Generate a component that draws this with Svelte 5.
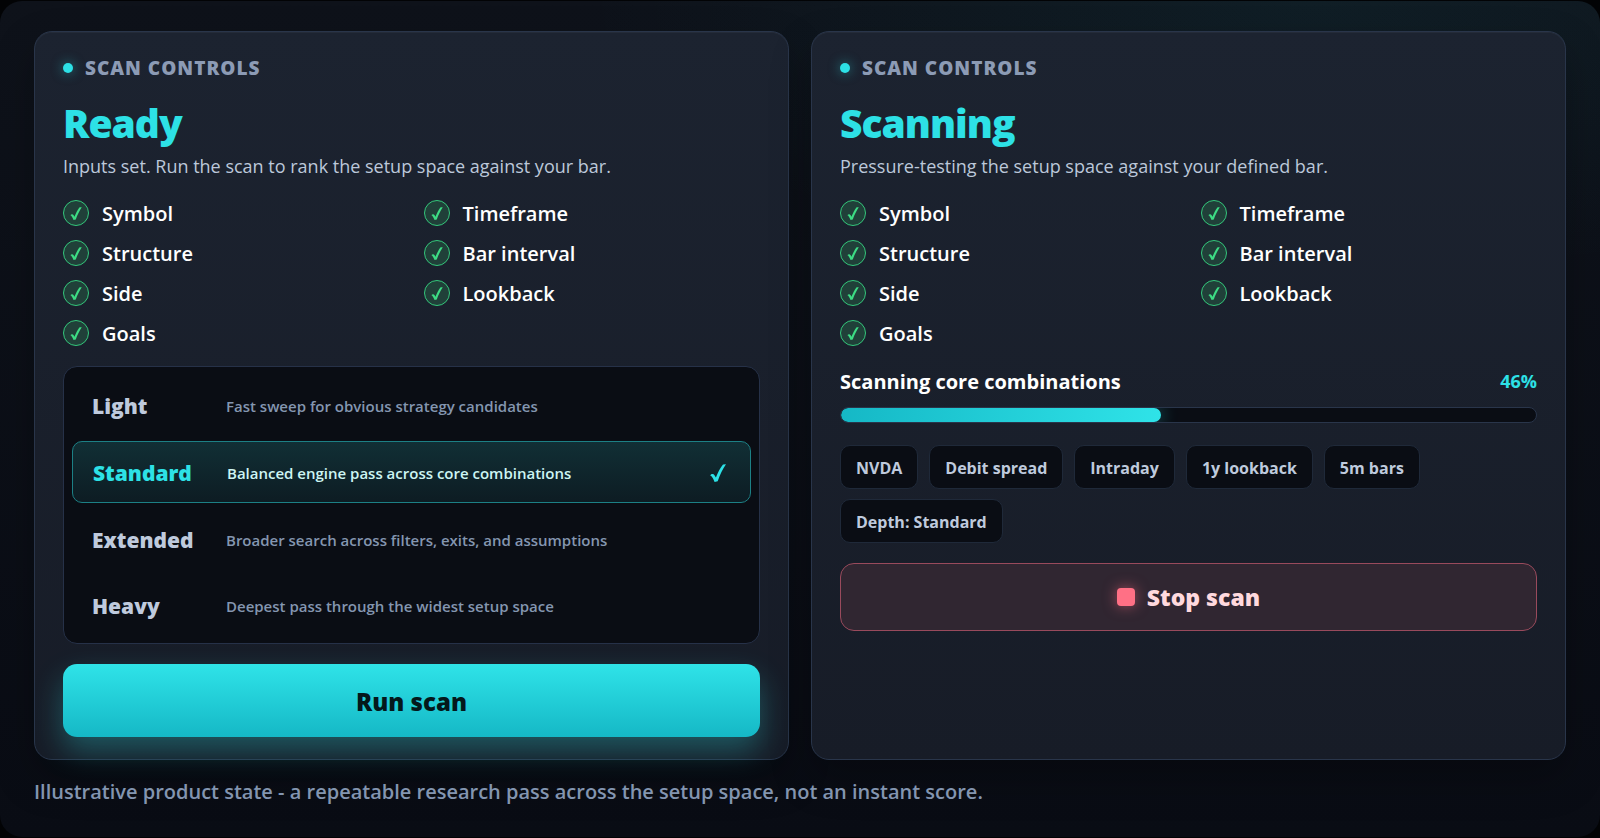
<script>
  const inputs = ['Symbol', 'Timeframe', 'Structure', 'Bar interval', 'Side', 'Lookback', 'Goals'];

  const depths = [
    { name: 'Light', note: 'Fast sweep for obvious strategy candidates' },
    { name: 'Standard', note: 'Balanced engine pass across core combinations' },
    { name: 'Extended', note: 'Broader search across filters, exits, and assumptions' },
    { name: 'Heavy', note: 'Deepest pass through the widest setup space' }
  ];

  let depth = 'Standard';
  let progress = 46;

  $: chips = ['NVDA', 'Debit spread', 'Intraday', '1y lookback', '5m bars', `Depth: ${depth}`];
</script>

{#snippet tick()}
  <svg class="tick" viewBox="0 0 16 18" aria-hidden="true">
    <path d="M0.2 11.4 C1.4 9.6 3.600 9.6 4.500 11.2 L5.900 13.600 C8 8.200 10.200 3.800 13 0.400 L16 0.200 C12.700 5 10 10.600 7.700 17.200 L4.600 17.900 C3.600 15.400 2.700 13.800 1.900 12.700 C1.400 12 0.800 11.600 0.200 11.400 Z" />
  </svg>
{/snippet}

{#snippet checklist()}
  <ul class="checklist">
    {#each inputs as input}
      <li>
        <span class="badge">{@render tick()}</span>
        <span class="item">{input}</span>
      </li>
    {/each}
  </ul>
{/snippet}

<main class="stage">
  <div class="panels">
    <section class="panel">
      <div class="eyebrow"><span class="dot"></span>SCAN CONTROLS</div>
      <header>
        <h2>Ready</h2>
        <p>Inputs set. Run the scan to rank the setup space against your bar.</p>
      </header>

      {@render checklist()}

      <div class="depths" role="radiogroup" aria-label="Scan depth">
        {#each depths as option}
          <label class="depth" class:selected={depth === option.name}>
            <input type="radio" name="depth" value={option.name} bind:group={depth} />
            <span class="depth-name">{option.name}</span>
            <span class="depth-note">{option.note}</span>
            {#if depth === option.name}
              {@render tick()}
            {/if}
          </label>
        {/each}
      </div>

      <button class="run">Run scan</button>
    </section>

    <section class="panel">
      <div class="eyebrow"><span class="dot"></span>SCAN CONTROLS</div>
      <header>
        <h2>Scanning</h2>
        <p>Pressure-testing the setup space against your defined bar.</p>
      </header>

      {@render checklist()}

      <div class="progress">
        <div class="progress-head">
          <span>Scanning core combinations</span>
          <span class="percent">{progress}%</span>
        </div>
        <div class="track" role="progressbar" aria-label="Scanning core combinations" aria-valuenow={progress} aria-valuemin="0" aria-valuemax="100">
          <div class="fill" style="width: {progress}%"></div>
        </div>
      </div>

      <div class="chips">
        {#each chips as chip}
          <span class="chip">{chip}</span>
        {/each}
      </div>

      <button class="stop"><span class="stop-icon"></span>Stop scan</button>
    </section>
  </div>

  <p class="caption">Illustrative product state - a repeatable research pass across the setup space, not an instant score.</p>
</main>

<style>
  :global(body) {
    margin: 0;
    background: #020305;
    font-family: 'Segoe UI', 'Open Sans', 'Noto Sans', sans-serif;
    color: #ffffff;
  }

  .stage {
    margin: 1px 0;
    padding: 30px 34px 29px;
    border-radius: 22px;
    background:
      radial-gradient(ellipse 46% 34% at 82% 0%, rgba(45, 225, 230, 0.06), transparent),
      linear-gradient(180deg, #0e121a, #090c14);
  }

  .panels {
    display: grid;
    grid-template-columns: repeat(2, minmax(0, 1fr));
    gap: 22px;
  }

  .panel {
    display: flex;
    flex-direction: column;
    gap: 20px;
    padding: 23px 28px 22px;
    border: 1px solid #29354a;
    border-radius: 18px;
    background: linear-gradient(180deg, #1c2330, #171c27);
    box-shadow: 0 18px 40px rgba(0, 0, 0, 0.25), inset 0 1px 0 rgba(255, 255, 255, 0.04);
  }

  .eyebrow {
    display: flex;
    align-items: center;
    gap: 12px;
    font-size: 19px;
    line-height: 26px;
    font-weight: 800;
    letter-spacing: 1px;
    color: #8c9bb5;
  }

  .dot {
    width: 10px;
    height: 10px;
    border-radius: 50%;
    background: #2de1e6;
    box-shadow: 0 0 12px rgba(45, 225, 230, 0.5);
  }

  h2 {
    margin: 0;
    font-size: 39px;
    line-height: 44px;
    font-weight: 800;
    letter-spacing: -1px;
    color: #2de1e6;
  }

  header p {
    margin: 7px 0 0;
    font-size: 18px;
    line-height: 28px;
    color: #bcc8da;
  }

  .checklist {
    display: grid;
    grid-template-columns: 1fr 1fr;
    gap: 14px 24px;
    margin: 0;
    padding: 0;
    list-style: none;
  }

  .checklist li {
    display: flex;
    align-items: center;
    gap: 13px;
    height: 26px;
    font-size: 20px;
    font-weight: 600;
  }

  .item {
    line-height: 24px;
    padding-top: 2px;
  }

  .badge {
    display: flex;
    align-items: center;
    justify-content: center;
    box-sizing: border-box;
    width: 26px;
    height: 26px;
    border: 1px solid #34c77b;
    border-radius: 50%;
    background: #204039;
    color: #3ddc84;
  }

  .tick {
    width: 16px;
    height: 18px;
    fill: currentColor;
  }

  .badge .tick {
    width: 12px;
    height: 13px;
  }

  .depths {
    display: flex;
    flex-direction: column;
    gap: 6px;
    padding: 8px;
    border: 1px solid #263148;
    border-radius: 14px;
    background: #0a0d14;
  }

  .depth {
    position: relative;
    display: grid;
    grid-template-columns: 118px 1fr auto;
    align-items: center;
    column-gap: 16px;
    padding: 17px 20px 15px;
    border-radius: 10px;
    line-height: 28px;
    cursor: pointer;
  }

  .depth input {
    position: absolute;
    inset: 0;
    margin: 0;
    opacity: 0;
    cursor: pointer;
  }

  .depth-name {
    font-size: 21px;
    font-weight: 800;
    color: #bfcadd;
  }

  .depth-note {
    font-size: 15px;
    font-weight: 600;
    color: #8496b0;
  }

  .depth.selected {
    border: 1px solid #1c8085;
    background: linear-gradient(180deg, #112f35, #0d1c23);
    color: #2de1e6;
  }

  .selected .depth-name {
    color: #2de1e6;
  }

  .selected .depth-note {
    color: #cdf5f3;
  }

  .selected .tick {
    margin-right: 4px;
  }

  button {
    font-family: inherit;
    font-weight: 800;
    border-radius: 14px;
    cursor: pointer;
  }

  .run {
    padding: 21px 20px 19px;
    border: none;
    font-size: 24px;
    line-height: 33px;
    background: linear-gradient(180deg, #2fe3e8, #15b8c6);
    color: #04181b;
    box-shadow: 0 14px 30px rgba(45, 225, 230, 0.3);
  }

  .progress {
    display: flex;
    flex-direction: column;
    gap: 10px;
    padding-bottom: 2px;
  }

  .progress-head {
    display: flex;
    align-items: center;
    justify-content: space-between;
    font-size: 20px;
    line-height: 31px;
    font-weight: 700;
  }

  .percent {
    font-size: 18px;
    color: #2de1e6;
  }

  .track {
    height: 14px;
    border: 1px solid #29354a;
    border-radius: 8px;
    background: #0a0d14;
    overflow: hidden;
  }

  .fill {
    height: 100%;
    border-radius: 8px;
    background: linear-gradient(90deg, #15b8c6, #2fe3e8);
    box-shadow: 0 0 18px rgba(45, 225, 230, 0.45);
  }

  .chips {
    display: flex;
    flex-wrap: wrap;
    gap: 10px 11px;
  }

  .chip {
    padding: 9px 15px 7px;
    border: 1px solid #1f2939;
    border-radius: 10px;
    background: #0a0d14;
    font-size: 16px;
    line-height: 26px;
    font-weight: 700;
    color: #bfcadd;
  }

  .stop {
    display: flex;
    align-items: center;
    justify-content: center;
    gap: 12px;
    padding: 17px;
    border: 1px solid #994a5c;
    font-size: 23px;
    line-height: 32px;
    background: #302631;
    color: #ffd9de;
  }

  .stop-icon {
    width: 18px;
    height: 18px;
    border-radius: 4px;
    background: #ff7085;
    box-shadow: 0 0 14px rgba(255, 112, 133, 0.55);
  }

  .caption {
    margin: 16px 0 0;
    font-size: 20px;
    line-height: 32px;
    font-weight: 600;
    color: #8395b0;
  }
</style>
